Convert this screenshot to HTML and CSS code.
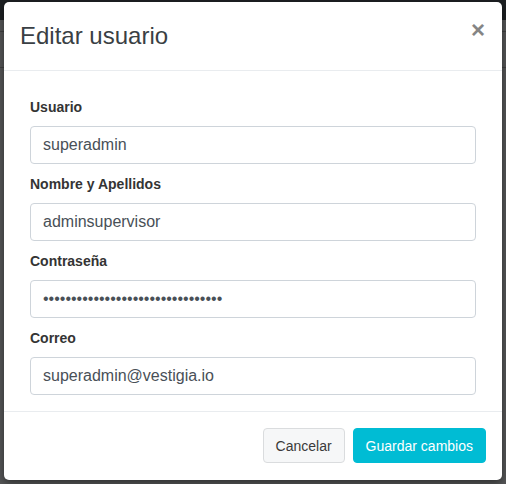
FILE: index.html
```html
<!DOCTYPE html>
<html lang="es">
<head>
<meta charset="utf-8">
<title>Editar usuario</title>
<link rel="stylesheet" href="styles.css">
</head>
<body>
<div class="modal">
  <div class="modal-header">
    <h5 class="modal-title">Editar usuario</h5>
    <button class="close" type="button" aria-label="Cerrar">&times;</button>
  </div>
  <div class="modal-body">
    <div class="form-group">
      <label class="form-label">Usuario</label>
      <input class="form-control" type="text" value="superadmin">
    </div>
    <div class="form-group">
      <label class="form-label">Nombre y Apellidos</label>
      <input class="form-control" type="text" value="adminsupervisor">
    </div>
    <div class="form-group">
      <label class="form-label">Contraseña</label>
      <input class="form-control" type="password" value="12345678901234567890123456789012">
    </div>
    <div class="form-group">
      <label class="form-label">Correo</label>
      <input class="form-control" type="text" value="superadmin@vestigia.io">
    </div>
  </div>
  <div class="modal-footer">
    <button class="btn btn-light" type="button">Cancelar</button>
    <button class="btn btn-info" type="button">Guardar cambios</button>
  </div>
</div>
</body>
</html>
```
FILE: styles.css
```css
html, body {
  margin: 0;
  height: 100%;
}
body {
  font-family: "Liberation Sans", Arial, sans-serif;
  padding: 2px 4px 0 4px;
  box-sizing: border-box;
  overflow: hidden;
  background:
    linear-gradient(to bottom, transparent 31px, #3f4041 31px, #3f4041 32px, transparent 32px),
    linear-gradient(to bottom, transparent 67px, #404142 67px, #404142 68px, transparent 68px),
    linear-gradient(to bottom, #1d2023 0, #1d2023 20px, #555657 20px, #555657 100%);
}
.modal {
  width: 498px;
  background: #fff;
  border-radius: 5px;
  box-shadow: 0 3px 8px rgba(0, 0, 0, 0.45);
  display: flex;
  flex-direction: column;
}
.modal-header {
  display: flex;
  justify-content: space-between;
  align-items: flex-start;
  padding: 16px 16px 16px 16px;
  border-bottom: 1px solid #e9ecef;
}
.modal-title {
  margin: 0;
  font-size: 24px;
  font-weight: 400;
  line-height: 36px;
  color: #3a3f44;
}
.close {
  border: 0;
  background: transparent;
  padding: 0;
  margin: 0 1px 0 0;
  font-family: "Liberation Sans", Arial, sans-serif;
  font-size: 24px;
  font-weight: 700;
  line-height: 24px;
  color: #858585;
  cursor: pointer;
}
.modal-body {
  display: flex;
  flex-direction: column;
  gap: 10px;
  padding: 26px 26px 16px 26px;
}
.form-group {
  display: flex;
  flex-direction: column;
}
.form-label {
  font-size: 14px;
  font-weight: 700;
  line-height: 21px;
  color: #343434;
  margin-bottom: 8px;
}
.form-control {
  box-sizing: border-box;
  height: 38px;
  width: 100%;
  margin: 0;
  padding: 6px 12px;
  font-family: "Liberation Sans", Arial, sans-serif;
  font-size: 16px;
  line-height: 24px;
  color: #495057;
  background: #fff;
  border: 1px solid #ced4da;
  border-radius: 4px;
  outline: none;
}
.modal-footer {
  display: flex;
  justify-content: flex-end;
  gap: 8px;
  padding: 16px 16px 17px 16px;
  border-top: 1px solid #e9ecef;
}
.btn {
  box-sizing: border-box;
  height: 35px;
  padding: 0 12px;
  font-family: "Liberation Sans", Arial, sans-serif;
  font-size: 14px;
  line-height: 20px;
  border-radius: 4px;
  border: 1px solid transparent;
  cursor: pointer;
}
.btn-light {
  background: #f6f7f8;
  border-color: #dadcde;
  color: #3a3a3a;
}
.btn-info {
  background: #00bcd4;
  border-color: #00bcd4;
  color: #fff;
}
```
